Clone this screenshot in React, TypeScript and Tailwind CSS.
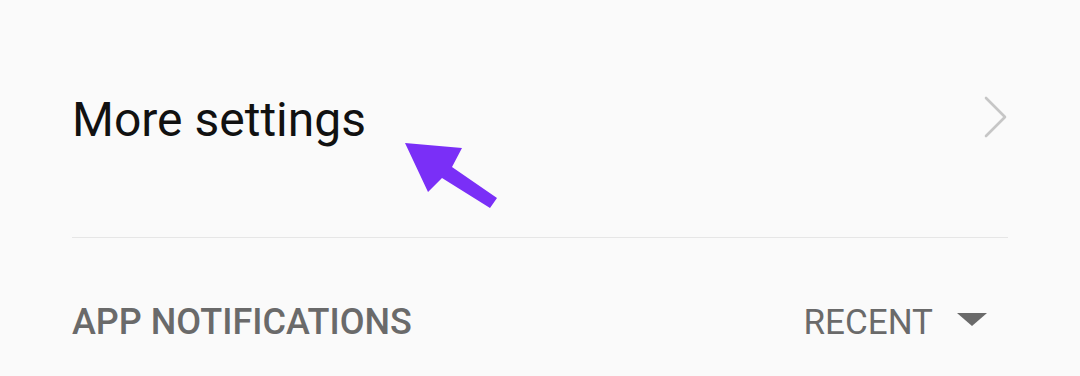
import React from 'react';

export default function App() {
  return (
    <div
      className="relative h-[376px] w-full overflow-hidden bg-[#fafafa] px-[72px]"
      style={{ fontFamily: 'Roboto, "Noto Sans", sans-serif' }}
    >
      {/* row: more settings */}
      <div className="flex h-[237px] items-center justify-between">
        <span className="mt-[3px] text-[48px] leading-none text-[#111111]">More settings</span>
        <svg width="24" height="42" viewBox="0 0 24 42" className="-mt-[3px]">
          <polyline
            points="2,2 21,21 2,40"
            fill="none"
            stroke="#c6c6c6"
            strokeWidth="2.6"
            strokeLinecap="round"
            strokeLinejoin="round"
          />
        </svg>
      </div>

      <div className="h-px bg-[#e6e6e6]" />

      {/* section header */}
      <div className="mt-[66px] flex items-center justify-between">
        <span className="text-[36px] font-medium leading-none text-[#6a6a6a]">APP NOTIFICATIONS</span>
        <div className="mr-[21px] flex items-center gap-[24px]">
          <span className="text-[35px] leading-none text-[#6a6a6a]">RECENT</span>
          <svg width="30" height="13" viewBox="0 0 30 13" className="mt-[-6px]">
            <polygon points="0,0 30,0 15,13" fill="#6a6a6a" />
          </svg>
        </div>
      </div>

      {/* annotation arrow */}
      <svg
        className="absolute left-0 top-0"
        width="1080"
        height="376"
        viewBox="0 0 1080 376"
      >
        <polygon
          points="405,143 462,148 452,167 497,198 490,208 442,178 428,192"
          fill="#7a2ff7"
          strokeLinejoin="round"
        />
      </svg>
    </div>
  );
}
